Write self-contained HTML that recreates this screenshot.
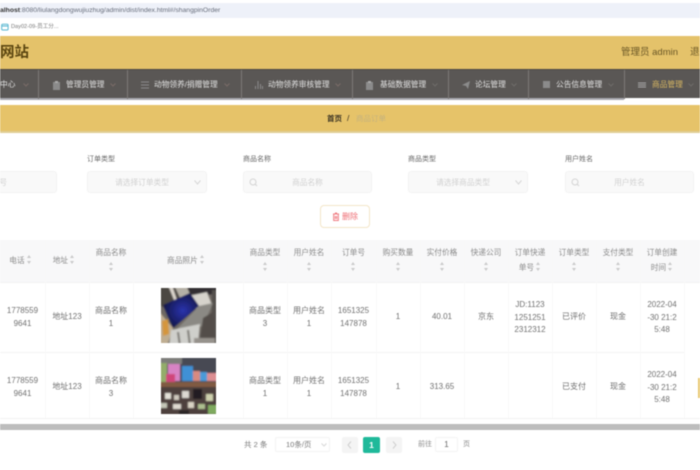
<!DOCTYPE html>
<html lang="zh">
<head>
<meta charset="utf-8">
<title>商品订单</title>
<style>
html,body{margin:0;padding:0;background:#fff}
body{width:700px;height:470px;overflow:hidden;position:relative;font-family:"Liberation Sans","Noto Sans CJK SC",sans-serif;color:#606266}
#w{position:absolute;left:0;top:0;width:700px;height:470px;overflow:hidden;filter:blur(.4px)}
.a{position:absolute;white-space:nowrap}
.b{position:absolute}
.n{position:absolute;top:70px;height:29px;line-height:30px;font-size:7.7px;color:#e2e2e2;white-space:nowrap}
.sep{position:absolute;top:70px;height:29px;width:1px;background:#7d7a78}
.chev{position:absolute;top:83px;width:6px;height:4px}
.lab{position:absolute;top:154px;font-size:7px;line-height:12px;color:#666;white-space:nowrap}
.inp{position:absolute;top:171px;height:22px;background:#f9f9f9;border:1px solid #f3f3f3;border-radius:3px;box-sizing:border-box;text-align:center;font-size:7.7px;line-height:21px;color:#d0d0d0;white-space:nowrap}
.c{position:absolute;text-align:center;font-size:8px;line-height:12.7px;color:#707070;white-space:normal;word-break:break-all}
.h{color:#8a8a8a;font-size:7.7px;line-height:15px}
.v{position:absolute;width:1px;top:240px;height:178px;background:#f8f8f8}
.s{display:inline-block;position:relative;width:5px;height:9px;vertical-align:-1px}
.s:before,.s:after{content:"";position:absolute;left:0;border-left:2.500px solid transparent;border-right:2.500px solid transparent}
.s:before{top:0;border-bottom:3px solid #cacaca}
.s:after{bottom:0;border-top:3px solid #cacaca}
</style>
</head>
<body>
<div id="w">
<!-- browser chrome -->
<div class="b" style="left:0;top:3px;width:700px;height:15px;background:#eef1f9"></div>
<div class="a" style="left:0;top:5px;font-size:6.8px;line-height:11px;color:#666c7a"><b style="color:#333">alhost</b>:8080/liulangdongwujiuzhug/admin/dist/index.html#/shangpinOrder</div>
<svg class="b" style="left:1px;top:23px" width="8" height="8" viewBox="0 0 8 8"><rect x=".7" y="1.2" width="6.4" height="5.8" rx="1" fill="none" stroke="#55b5d0" stroke-width="1"/><path d="M.7 3H7" stroke="#55b5d0"/></svg>
<div class="a" style="left:11px;top:23px;font-size:5.6px;line-height:9px;color:#777">Day02-09-员工分...</div>

<!-- header -->
<div class="b" style="left:0;top:36px;width:700px;height:33px;background:#e4c26a"></div>
<div class="a" style="left:0;top:44px;font-size:14.500px;line-height:19px;font-weight:bold;color:#5a4510">网站</div>
<div class="a" style="left:621px;top:46px;font-size:9.500px;line-height:14px;color:#6a5726">管理员 admin</div>
<div class="a" style="left:690px;top:46px;font-size:9.500px;line-height:14px;color:#6a5726">退出</div>

<!-- nav -->
<div class="b" style="left:0;top:69px;width:700px;height:29px;background:#5a5755;border-top:1px solid #4a4846;box-sizing:border-box"></div>
<div class="b" style="left:0;top:98px;width:624px;height:1.500px;background:#a9a9b0"></div>
<div class="n" style="left:0">中心</div>
<svg class="chev" style="left:23px" viewBox="0 0 6 4"><path d="M.5.5L3 3L5.500.5" fill="none" stroke="#7a6c68"/></svg>
<div class="sep" style="left:38px"></div>
<svg class="b" style="left:53px;top:81px" width="8" height="9"><rect x="0" y="1" width="7" height="8" fill="#8b8b8b"/><rect x="2" y="0" width="3" height="2" fill="#aaa"/></svg>
<div class="n" style="left:66px">管理员管理</div>
<svg class="chev" style="left:110px" viewBox="0 0 6 4"><path d="M.5.5L3 3L5.500.5" fill="none" stroke="#7a6c68"/></svg>
<div class="sep" style="left:127px"></div>
<svg class="b" style="left:141px;top:81px" width="8" height="8"><path d="M0 1h8M0 4h8M0 7h8" stroke="#8b8b8b"/></svg>
<div class="n" style="left:154px">动物领养/捐赠管理</div>
<svg class="chev" style="left:224px" viewBox="0 0 6 4"><path d="M.5.5L3 3L5.500.5" fill="none" stroke="#7a6c68"/></svg>
<div class="sep" style="left:241px"></div>
<svg class="b" style="left:255px;top:81px" width="8" height="8"><path d="M.5 8V5M3 8V0M5.500 8V3M7.500 8V5" stroke="#8b8b8b"/></svg>
<div class="n" style="left:268px">动物领养审核管理</div>
<svg class="chev" style="left:335px" viewBox="0 0 6 4"><path d="M.5.5L3 3L5.500.5" fill="none" stroke="#7a6c68"/></svg>
<div class="sep" style="left:352px"></div>
<svg class="b" style="left:366px;top:81px" width="8" height="9"><rect x="0" y="1" width="7" height="8" fill="#8b8b8b"/><rect x="2" y="0" width="3" height="2" fill="#aaa"/></svg>
<div class="n" style="left:380px">基础数据管理</div>
<svg class="chev" style="left:432px" viewBox="0 0 6 4"><path d="M.5.5L3 3L5.500.5" fill="none" stroke="#6f6c6a"/></svg>
<div class="sep" style="left:448px"></div>
<svg class="b" style="left:462px;top:81px" width="8" height="8"><path d="M0 4L8 0L6 8L4 5Z" fill="#8b8b8b"/></svg>
<div class="n" style="left:475px">论坛管理</div>
<svg class="chev" style="left:511px" viewBox="0 0 6 4"><path d="M.5.5L3 3L5.500.5" fill="none" stroke="#6f6c6a"/></svg>
<div class="sep" style="left:528px"></div>
<svg class="b" style="left:543px;top:81px" width="7" height="8"><rect width="7" height="7" fill="#8b8b8b"/></svg>
<div class="n" style="left:556px">公告信息管理</div>
<svg class="chev" style="left:608px" viewBox="0 0 6 4"><path d="M.5.5L3 3L5.500.5" fill="none" stroke="#6f6c6a"/></svg>
<div class="sep" style="left:624px"></div>
<svg class="b" style="left:638px;top:82px" width="8" height="6"><path d="M0 1h8M0 3h8M0 5h8" stroke="#a9a9a9"/></svg>
<div class="n" style="left:652px;color:#d9b862">商品管理</div>
<svg class="chev" style="left:688px" viewBox="0 0 6 4"><path d="M.5.5L3 3L5.500.5" fill="none" stroke="#6f6c6a"/></svg>

<!-- breadcrumb -->
<div class="b" style="left:0;top:105px;width:700px;height:28px;background:#e6c369;border-bottom:2px solid #e0cd94;box-sizing:border-box"></div>
<div class="a" style="left:327px;top:112px;font-size:7.500px;line-height:13px;font-weight:bold;color:#3d3524">首页</div>
<div class="a" style="left:347px;top:112px;font-size:8.500px;line-height:13px;color:#3d3524">/</div>
<div class="a" style="left:356px;top:112px;font-size:7.500px;line-height:13px;color:#c4b27e">商品订单</div>

<!-- filters -->
<div class="inp" style="left:-40px;width:97px;padding-right:26px">订单号</div>
<div class="lab" style="left:87px">订单类型</div>
<div class="inp" style="left:87px;width:120px;padding-right:10px">请选择订单类型</div>
<svg class="b" style="left:194px;top:180px" width="7" height="5"><path d="M.5.5L3.500 4L6.500.5" fill="none" stroke="#d6d6d6"/></svg>
<div class="lab" style="left:243px">商品名称</div>
<div class="inp" style="left:243px;width:129px">商品名称</div>
<svg class="b" style="left:249px;top:178px" width="9" height="9"><circle cx="4" cy="4" r="3" fill="none" stroke="#d4d4d4"/><path d="M6.200 6.200L8 8" stroke="#d4d4d4"/></svg>
<div class="lab" style="left:408px">商品类型</div>
<div class="inp" style="left:408px;width:120px;padding-right:10px">请选择商品类型</div>
<svg class="b" style="left:515px;top:180px" width="7" height="5"><path d="M.5.5L3.500 4L6.500.5" fill="none" stroke="#d6d6d6"/></svg>
<div class="lab" style="left:565px">用户姓名</div>
<div class="inp" style="left:565px;width:129px">用户姓名</div>
<svg class="b" style="left:571px;top:178px" width="9" height="9"><circle cx="4" cy="4" r="3" fill="none" stroke="#d4d4d4"/><path d="M6.200 6.200L8 8" stroke="#d4d4d4"/></svg>

<!-- delete -->
<div class="b" style="left:320px;top:205px;width:50px;height:23px;box-sizing:border-box;border:1px solid #f3e6c8;border-radius:4px;background:#fff"></div>
<svg class="b" style="left:332px;top:212px" width="8" height="9"><path d="M1 2h6M3 1h2M1.700 2.500v6h4.600v-6M3.300 4v3M4.700 4v3" fill="none" stroke="#ef7a80"/></svg>
<div class="a" style="left:342px;top:210px;font-size:8px;line-height:13px;color:#ee6b72">删除</div>

<!-- table -->
<div class="b" style="left:0;top:240px;width:700px;height:42px;background:#f8f8f9"></div>
<div class="b" style="left:0;top:352px;width:685px;height:1px;background:#f4f4f4"></div>
<div class="b" style="left:0;top:282px;width:700px;height:1px;background:#f2f2f2"></div>
<div class="b" style="left:0;top:418px;width:700px;height:1px;background:#f2f2f2"></div>
<div class="v" style="left:45px"></div><div class="v" style="left:89px"></div><div class="v" style="left:133px"></div><div class="v" style="left:243px"></div><div class="v" style="left:287px"></div><div class="v" style="left:331px"></div><div class="v" style="left:376px"></div><div class="v" style="left:420px"></div><div class="v" style="left:464px"></div><div class="v" style="left:508px"></div><div class="v" style="left:552px"></div><div class="v" style="left:596px"></div><div class="v" style="left:640px"></div><div class="v" style="left:684px"></div>

<!-- head cells -->
<div class="c h" style="left:-3px;top:253px;width:45px;padding-left:1px">电话 <span class="s"></span></div>
<div class="c h" style="left:42px;top:253px;width:44px">地址 <span class="s"></span></div>
<div class="c h" style="left:89px;top:245px;width:44px">商品名称<br><span class="s"></span></div>
<div class="c h" style="left:131px;top:253px;width:110px">商品照片 <span class="s"></span></div>
<div class="c h" style="left:243px;top:245px;width:44px">商品类型<br><span class="s"></span></div>
<div class="c h" style="left:287px;top:245px;width:44px">用户姓名<br><span class="s"></span></div>
<div class="c h" style="left:331px;top:245px;width:45px">订单号<br><span class="s"></span></div>
<div class="c h" style="left:376px;top:245px;width:44px">购买数量<br><span class="s"></span></div>
<div class="c h" style="left:420px;top:245px;width:44px">实付价格<br><span class="s"></span></div>
<div class="c h" style="left:464px;top:245px;width:44px">快递公司<br><span class="s"></span></div>
<div class="c h" style="left:508px;top:245px;width:44px">订单快递<br>单号 <span class="s"></span></div>
<div class="c h" style="left:552px;top:245px;width:44px">订单类型<br><span class="s"></span></div>
<div class="c h" style="left:596px;top:245px;width:44px">支付类型<br><span class="s"></span></div>
<div class="c h" style="left:640px;top:245px;width:44px">订单创建<br>时间 <span class="s"></span></div>

<!-- row 1 -->
<div class="c" style="left:0;top:305px;width:45px">1778559<br>9641</div>
<div class="c" style="left:45px;top:311px;width:44px">地址123</div>
<div class="c" style="left:89px;top:305px;width:44px">商品名称<br>1</div>
<svg class="b" style="left:161px;top:288px" width="55" height="55" viewBox="0 0 55 55">
<defs>
<radialGradient id="g1" cx=".55" cy=".5" r=".6"><stop offset="0" stop-color="#2a33ad"/><stop offset="1" stop-color="#10133c"/></radialGradient>
<filter id="bl" x="-10%" y="-10%" width="120%" height="120%"><feGaussianBlur stdDeviation=".7"/></filter>
</defs>
<rect width="55" height="55" fill="#6f6963"/>
<g filter="url(#bl)">
<path d="M-3 -3H14L20 12L2 19L-3 16Z" fill="#4c4743"/>
<path d="M13 -3H27L30 8L20 12Z" fill="#b5b0a6"/>
<path d="M7 -3H11L16 12H13Z" fill="#dbd6cd"/>
<path d="M25 -3H58V5L40 8L29 6Z" fill="#302d31"/>
<path d="M27 8L46 4L51 17L36 22Z" fill="#d6d3cc"/>
<path d="M51 2H58V58H50Z" fill="#55514d"/>
<path d="M2 17L29 5L38 18L12 40Z" fill="url(#g1)"/>
<path d="M38 18L52 15L42 38L15 42Z" fill="#8b8984"/>
<path d="M-3 22L12 40L6 58H-3Z" fill="#bfae92"/>
<path d="M1 33L7 31L8 46L2 48Z" fill="#d4963e"/>
<path d="M10 42L39 36L37 58H8Z" fill="#cfcfcb"/>
<path d="M16 44L18 58H20L18 44ZM26 42L28 58H30L28 42Z" fill="#77746f"/>
<path d="M42 30L52 24L54 58H38Z" fill="#524e4a"/>
<path d="M33 50H54V58H33Z" fill="#96928c"/>
</g>
</svg>
<div class="c" style="left:243px;top:305px;width:44px">商品类型<br>3</div>
<div class="c" style="left:287px;top:305px;width:44px">用户姓名<br>1</div>
<div class="c" style="left:331px;top:305px;width:45px">1651325<br>147878</div>
<div class="c" style="left:376px;top:311px;width:44px">1</div>
<div class="c" style="left:420px;top:311px;width:44px">40.01</div>
<div class="c" style="left:464px;top:311px;width:44px">京东</div>
<div class="c" style="left:508px;top:299px;width:44px">JD:1123<br>1251251<br>2312312</div>
<div class="c" style="left:552px;top:311px;width:44px">已评价</div>
<div class="c" style="left:596px;top:311px;width:44px">现金</div>
<div class="c" style="left:640px;top:299px;width:44px">2022-04<br>-30 21:2<br>5:48</div>

<!-- row 2 -->
<div class="c" style="left:0;top:375px;width:45px">1778559<br>9641</div>
<div class="c" style="left:45px;top:381px;width:44px">地址123</div>
<div class="c" style="left:89px;top:375px;width:44px">商品名称<br>3</div>
<svg class="b" style="left:161px;top:358px" width="55" height="56" viewBox="0 0 55 56">
<rect width="55" height="56" fill="#5d4a45"/>
<g filter="url(#bl)">
<rect x="-3" y="-3" width="61" height="27" fill="#474a52"/>
<rect x="-3" y="-3" width="24" height="9" fill="#7d7d7a"/>
<rect x="-3" y="5" width="9" height="19" fill="#93ad6a"/>
<rect x="7" y="6" width="12" height="17" fill="#d883c4"/>
<rect x="5" y="16" width="9" height="8" fill="#d0447a"/>
<rect x="21" y="8" width="11" height="15" fill="#3f90d5"/>
<rect x="32" y="13" width="7" height="10" fill="#d88a80"/>
<rect x="39" y="14" width="7" height="9" fill="#4a9ad8"/>
<rect x="46" y="15" width="10" height="8" fill="#dc8e92"/>
<rect x="-3" y="24" width="61" height="5" fill="#805a42"/>
<rect x="-3" y="29" width="61" height="30" fill="#4e3f3c"/>
<rect x="4" y="35" width="6" height="6" fill="#e4e1d8"/>
<rect x="13" y="37" width="5" height="5" fill="#cfc9bd"/>
<rect x="21" y="33" width="7" height="7" fill="#dcd9d2"/>
<rect x="32" y="31" width="9" height="10" fill="#241f20"/>
<rect x="45" y="36" width="7" height="7" fill="#cfd0ae"/>
<rect x="-3" y="45" width="9" height="5" fill="#c5c7b8"/>
<rect x="12" y="46" width="8" height="5" fill="#e0dbd2"/>
<rect x="27" y="44" width="6" height="6" fill="#d9d3c4"/>
<rect x="37" y="46" width="7" height="5" fill="#adbf90"/>
<rect x="47" y="47" width="9" height="9" fill="#7faa5e"/>
<rect x="18" y="52" width="10" height="5" fill="#2a2626"/>
</g>
</svg>
<div class="c" style="left:243px;top:375px;width:44px">商品类型<br>1</div>
<div class="c" style="left:287px;top:375px;width:44px">用户姓名<br>1</div>
<div class="c" style="left:331px;top:375px;width:45px">1651325<br>147878</div>
<div class="c" style="left:376px;top:381px;width:44px">1</div>
<div class="c" style="left:420px;top:381px;width:44px">313.65</div>
<div class="c" style="left:552px;top:381px;width:44px">已支付</div>
<div class="c" style="left:596px;top:381px;width:44px">现金</div>
<div class="c" style="left:640px;top:369px;width:44px">2022-04<br>-30 21:2<br>5:48</div>
<div class="b" style="left:698px;top:378px;width:2px;height:20px;background:#e8c870"></div>

<!-- scrollbar -->
<div class="b" style="left:0;top:424px;width:700px;height:6px;background:#bdbdbd"></div>

<!-- pagination -->
<div class="a" style="left:244px;top:438px;font-size:7.500px;line-height:13px;color:#777">共 2 条</div>
<div class="b" style="left:275px;top:437px;width:55px;height:15px;box-sizing:border-box;border:1px solid #f3f3f3;border-radius:2px"></div>
<div class="a" style="left:286px;top:438px;font-size:7.500px;line-height:13px;color:#777">10条/页</div>
<svg class="b" style="left:321px;top:443px" width="6" height="4"><path d="M.5.5L3 3L5.500.5" fill="none" stroke="#d8d8d8"/></svg>
<div class="b" style="left:342px;top:437px;width:16px;height:16px;background:#f4f4f4;border-radius:2px"></div>
<svg class="b" style="left:347px;top:441px" width="5" height="8"><path d="M4 .5L1 4L4 7.500" fill="none" stroke="#cfcfcf"/></svg>
<div class="b" style="left:363px;top:437px;width:17px;height:16px;background:#1fb99a;border-radius:2px;color:#fff;font-size:8.500px;font-weight:bold;line-height:16px;text-align:center">1</div>
<div class="b" style="left:386px;top:437px;width:16px;height:16px;background:#f4f4f4;border-radius:2px"></div>
<svg class="b" style="left:392px;top:441px" width="5" height="8"><path d="M1 .5L4 4L1 7.500" fill="none" stroke="#cfcfcf"/></svg>
<div class="a" style="left:418px;top:438px;font-size:7px;line-height:13px;color:#888">前往</div>
<div class="b" style="left:435px;top:437px;width:23px;height:15px;box-sizing:border-box;border:1px solid #f4f4f4;border-radius:2px;text-align:center;font-size:8px;line-height:13px;color:#666">1</div>
<div class="a" style="left:463px;top:438px;font-size:7px;line-height:13px;color:#888">页</div>
</div>
</body>
</html>
